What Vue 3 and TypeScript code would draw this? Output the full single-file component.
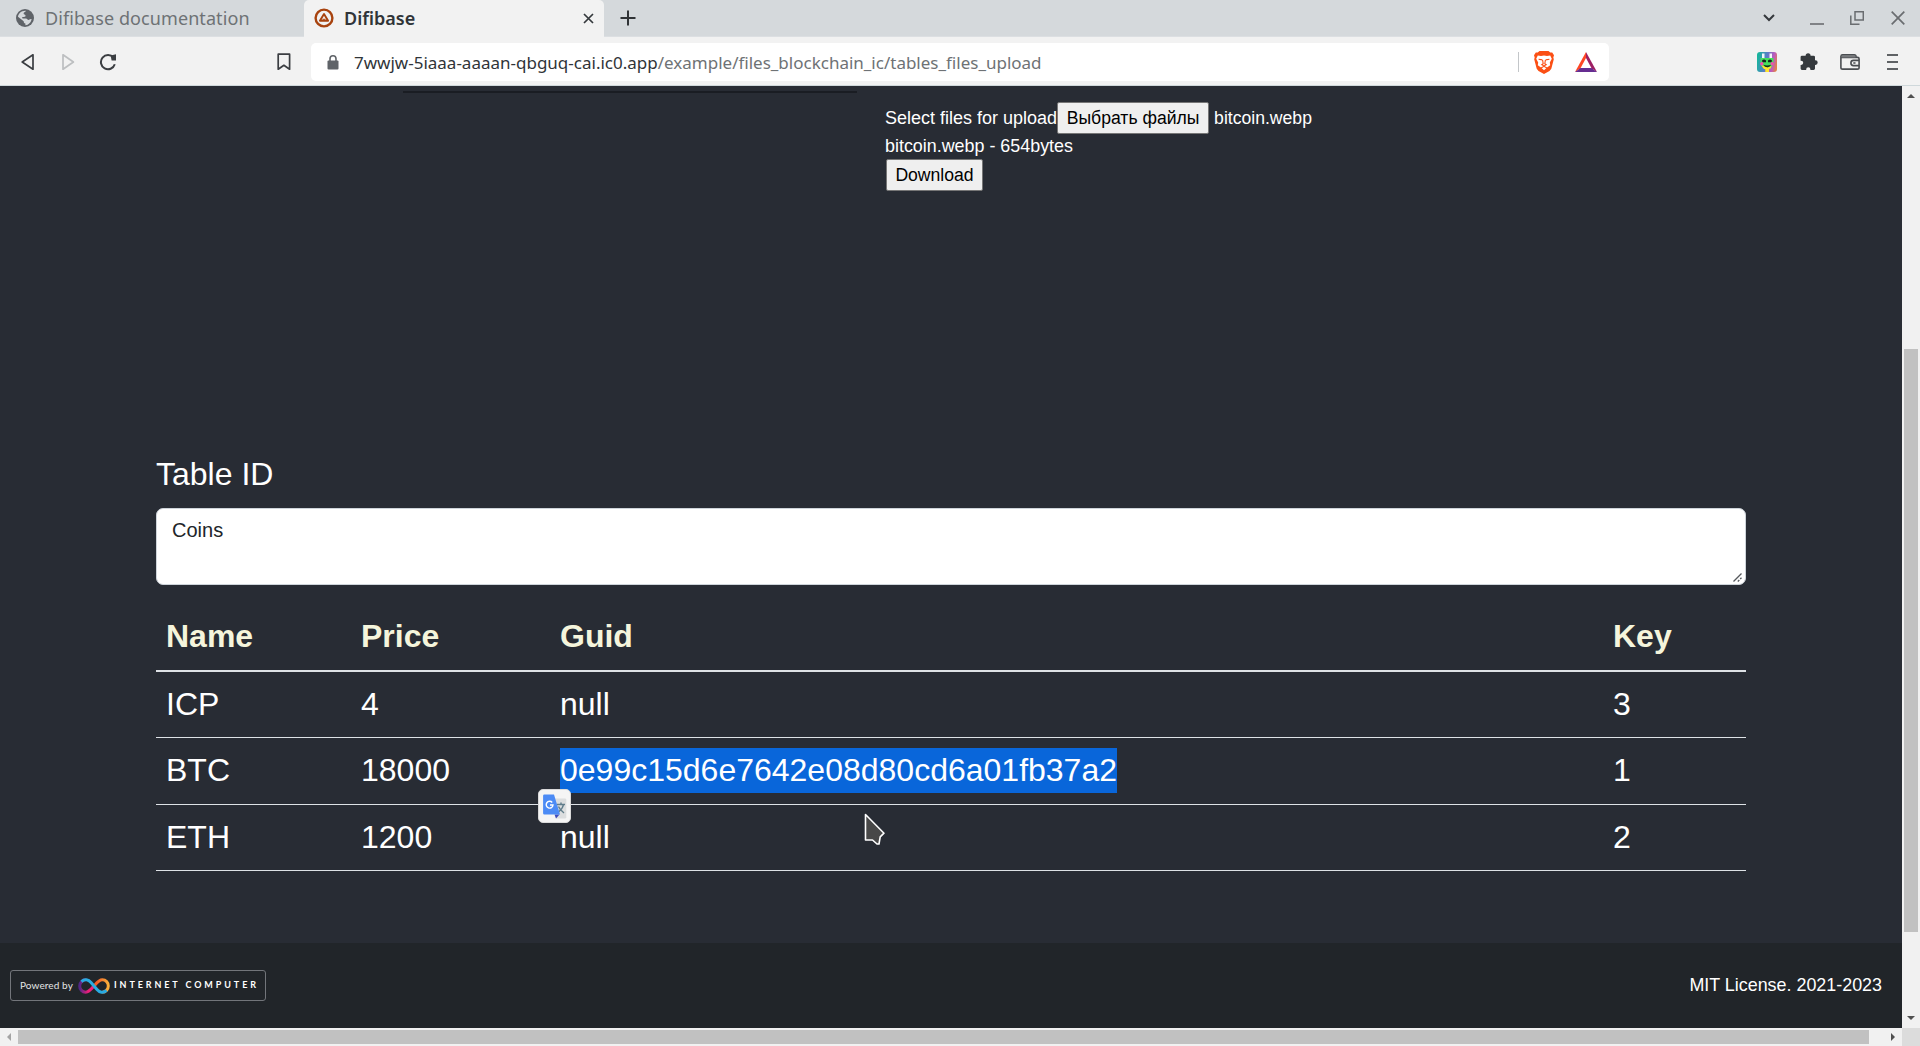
<script setup lang="ts">
interface Coin {
  name: string
  price: string
  guid: string
  key: string
  selected?: boolean
}

const coins: Coin[] = [
  { name: 'ICP', price: '4', guid: 'null', key: '3' },
  { name: 'BTC', price: '18000', guid: '0e99c15d6e7642e08d80cd6a01fb37a2', key: '1', selected: true },
  { name: 'ETH', price: '1200', guid: 'null', key: '2' },
]
</script>

<template>
  <div class="window">
    <div class="tabs">
      <div class="tab idle">
        <svg width="18" height="18" viewBox="0 0 18 18">
          <circle cx="9" cy="9" r="9" fill="#5f6368" />
          <path d="M10 1.900C9 3 7.600 2.900 7.600 4.600c0 1.300 2 .8 2 2.200 0 1.200-1.400 1.200-2.800 1.200-.9 0-1 1.400.2 1.400h2.800c1.600 0 1.600 1.500 2.600 1.500 1 0 1.200-.8 2.600-.8l.6-.2c-.6 3.400-3 6-6.200 6.300v-1.800c-1.400 0-1.700-1-1.700-2.200L2 7.800C2.400 4.500 5.600 1.500 10 1.900z" fill="#d5d9dc" />
        </svg>
        <span class="tab-title">Difibase documentation</span>
      </div>
      <div class="tab active">
        <svg width="20" height="20" viewBox="0 0 20 20" fill="none" stroke="#a8430f">
          <circle cx="10" cy="10" r="8.400" stroke-width="2.400" />
          <path d="M10 6 5.900 12.800h8.200z" stroke-width="1.900" stroke-linejoin="round" />
          <path d="M8.500 11.300h3" stroke-width="1" />
        </svg>
        <span class="tab-title">Difibase</span>
        <svg class="tab-close" width="11" height="11" viewBox="0 0 11 11" stroke="#35393d" stroke-width="1.700"><path d="M1 1l9 9M10 1l-9 9" /></svg>
      </div>
      <svg class="plus" width="16" height="16" viewBox="0 0 16 16" stroke="#303336" stroke-width="2"><path d="M8 .5v15M.5 8h15" /></svg>
      <div class="controls">
        <svg width="12" height="8" viewBox="0 0 12 8" fill="none" stroke="#35393d" stroke-width="2"><path d="M1 1l5 5 5-5" /></svg>
        <svg width="14" height="14" viewBox="0 0 14 14" stroke="#6a6d70" stroke-width="1.600"><path d="M0 13h14" /></svg>
        <svg width="14" height="14" viewBox="0 0 14 14" fill="none" stroke="#6a6d70" stroke-width="1.500"><path d="M5 .8h8.300v8.300H5zM.8 4.500v8.800H9.500" /></svg>
        <svg width="14" height="14" viewBox="0 0 14 14" stroke="#6a6d70" stroke-width="1.700"><path d="M.7.700l12.600 12.600M13.300.700.700 13.300" /></svg>
      </div>
    </div>

    <div class="toolbar">
      <div class="nav">
        <svg width="14" height="18" viewBox="0 0 14 18" fill="none" stroke="#3b3e42" stroke-width="1.700" stroke-linejoin="round"><path d="M12 1.800v14.400L1.200 9z" /></svg>
        <svg width="14" height="18" viewBox="0 0 14 18" fill="none" stroke="#bdbfc1" stroke-width="1.700" stroke-linejoin="round"><path d="M2 1.800v14.400L12.400 9z" /></svg>
        <svg class="reload" width="18" height="18" viewBox="0 0 18 18" fill="none" stroke="#3b3e42" stroke-width="2"><path d="M15.800 11.300A7.100 7.100 0 1 1 14.500 4.600" /><path d="M11.600 2.600 17 1.200v6.300h-4.400z" fill="#3b3e42" stroke="none" /></svg>
      </div>
      <svg class="bookmark" width="14" height="18" viewBox="0 0 14 18" fill="none" stroke="#3b3e42" stroke-width="1.700" stroke-linejoin="round"><path d="M1.200 1.200h11.400v15L6.900 12.300l-5.700 3.900z" /></svg>
      <div class="omnibox">
        <svg class="lock" width="12" height="15" viewBox="0 0 12 15"><rect x=".5" y="5.500" width="11" height="9" rx="1" fill="#5f6368" /><path d="M3 6V3.800a3 3 0 0 1 6 0V6" fill="none" stroke="#5f6368" stroke-width="1.600" /></svg>
        <span class="url"><b>7wwjw-5iaaa-aaaan-qbguq-cai.ic0.app</b>/example/files_blockchain_ic/tables_files_upload</span>
        <span class="separator"></span>
        <svg class="shield" width="20" height="23" viewBox="0 0 20 23">
          <path d="M5.500 0h9l1.800 1.600 1.900-.1L20 4.200l-.7 2.300.5 1.800-2.500 9.400-1.800 2.300L10 23l-5.500-3-1.800-2.300L.2 8.300l.5-1.800L0 4.200l1.800-2.700 1.900.1z" fill="#fb4f14" />
          <path d="M3.800 4.600 7 5l3-.5 3 .5 3.200-.4 1.600 3.200-2 3.600.4 2.800-3.200 2.400-3 2.600-3-2.600-3.200-2.400.4-2.800-2-3.600z" fill="#fff" />
          <path d="M4.600 8.300l3.800.6M15.400 8.300l-3.800.6M8.600 9l.6 3.800-1.400.9 2.200 1.200 2.200-1.200-1.400-.9.600-3.800M7 17l3-1.700 3 1.700" fill="none" stroke="#fb4f14" stroke-width="1.100" />
        </svg>
        <svg width="22" height="20" viewBox="0 0 22 20">
          <path d="M11 0v6L5.500 16.200 0 20z" fill="#ff4724" />
          <path d="M11 0v6l5.500 10.200L22 20z" fill="#9e1f63" />
          <path d="M0 20l5.500-4h11l5.500 4z" fill="#662d91" />
        </svg>
      </div>
      <div class="extensions">
        <svg width="20" height="20" viewBox="0 0 20 20">
          <defs>
            <linearGradient id="ext-bg" x1="0" x2="1" y1=".4" y2=".6"><stop offset="0" stop-color="#17b59c" /><stop offset=".45" stop-color="#5a7cc8" /><stop offset=".8" stop-color="#c05bbd" /><stop offset="1" stop-color="#e08248" /></linearGradient>
          </defs>
          <rect width="20" height="20" rx="3" fill="url(#ext-bg)" />
          <path d="M5 1.500h2.500V7H5zM12.500 1.500H15V7h-2.500z" fill="#f2f5fa" />
          <path d="M3.500 6h13v6l-3 4.500h-7l-3-4.500z" fill="#46e05c" />
          <path d="M4 13l3 4 3 .5 3.500-1 1-2.500-4 1.500z" fill="#ffe62b" />
          <path d="M5 8.500c1-1.500 3-1.500 4 0v1.700H5.500zM11 8.500c1-1.500 3-1.500 4 0l-.5 1.700H11z" fill="#16231c" />
          <circle cx="4.800" cy="11.800" r="1.700" fill="#f24fae" /><circle cx="15.200" cy="11.800" r="1.700" fill="#f24fae" />
          <path d="M6.500 12.800c2 .8 5 .8 7.500 0-.8 3-6 3.600-7.500 0z" fill="#14321a" />
          <path d="M8.300 16.200h3.700V20H8.300z" fill="#ffe62b" />
        </svg>
        <svg width="19" height="19" viewBox="0 0 19 19"><path d="M3 3.700h3.600a2.500 2.500 0 1 1 5 0h3a1.400 1.400 0 0 1 1.400 1.400v3.200h.4a2.300 2.300 0 0 1 0 4.600H16v3.600a1.400 1.400 0 0 1-1.400 1.400h-3.200v-.6a2.100 2.100 0 0 0-4.200 0v.6H3a1.400 1.400 0 0 1-1.400-1.400V13h.5a2.100 2.100 0 0 0 0-4.300h-.5V5.100A1.400 1.400 0 0 1 3 3.700z" fill="#35393d" /></svg>
        <svg width="20" height="16" viewBox="0 0 20 16" fill="none" stroke="#4a4d51" stroke-width="1.600"><path d="M.9 2.500A1.700 1.700 0 0 1 2.600.9h11.700a1.700 1.700 0 0 1 1.700 1.700v.8h1.500a1.600 1.600 0 0 1 1.600 1.600v8.400a1.700 1.700 0 0 1-1.700 1.700H2.600A1.700 1.700 0 0 1 .9 13.400zM1 3.400h15M19 6.400h-5.500a2.600 2.600 0 0 0 0 5.200H19M13.300 9H15.500" /><path d="M1.500 1.500h14v2h-14z" fill="#77797c" stroke="none" /></svg>
        <svg width="11" height="16" viewBox="0 0 11 16" stroke="#2f3337" stroke-width="1.700"><path d="M0 1h11M0 8h11M0 15h11" /></svg>
      </div>
    </div>

    <div class="viewport">
      <main class="page">
        <section class="upload">
          <div class="rule-column"><div class="rule"></div></div>
          <div class="upload-form">
            <div class="file-row"><span>Select files for upload</span><button class="choose">Выбрать файлы</button><span class="file-name">bitcoin.webp</span></div>
            <div class="file-info">bitcoin.webp - 654bytes</div>
            <button class="download">Download</button>
          </div>
        </section>

        <section class="table-section">
          <div class="label">Table ID</div>
          <div class="textarea">
            <span>Coins</span>
            <svg class="grip" width="9" height="9" viewBox="0 0 9 9" stroke="#55585c" stroke-width="1.300"><path d="M.5 8.500l8-8M4.800 8.500l1.500-1.500M7.200 6l1.300-1.300" /></svg>
          </div>
          <table>
            <thead>
              <tr><th class="c-name">Name</th><th class="c-price">Price</th><th class="c-guid">Guid</th><th class="c-key">Key</th></tr>
            </thead>
            <tbody>
              <tr v-for="coin in coins" :key="coin.name">
                <td>{{ coin.name }}</td>
                <td>{{ coin.price }}</td>
                <td><span :class="{ selected: coin.selected }">{{ coin.guid }}</span></td>
                <td>{{ coin.key }}</td>
              </tr>
            </tbody>
          </table>
        </section>

        <footer>
          <div class="badge">
            <span class="powered">Powered by</span>
            <svg width="32" height="16" viewBox="0 0 32 16" fill="none" stroke-width="3">
              <defs>
                <linearGradient id="ic-warm" x1="0" x2="1"><stop offset=".2" stop-color="#f15a24" /><stop offset="1" stop-color="#fbb03b" /></linearGradient>
                <linearGradient id="ic-pink" x1="0" x2="1"><stop offset="0" stop-color="#522785" /><stop offset=".6" stop-color="#ed1e79" /></linearGradient>
              </defs>
              <path d="M16 8c3-3.500 5-6.200 8.300-6.200A6 6 0 0 1 30.300 8c0 3.500-2.800 6.200-6 6.200" stroke="url(#ic-warm)" />
              <path d="M16 8c-3 3.500-5 6.200-8.300 6.200A6 6 0 0 1 1.700 8c0-3.500 2.800-6.200 6-6.200" stroke="url(#ic-pink)" />
              <path d="M3.500 3.600c3.200-3 7-2 9.500.9l6 7c2.500 3 6.300 3.900 9.500.9" stroke="#29abe2" />
            </svg>
            <span class="brand">INTERNET COMPUTER</span>
          </div>
          <span class="license">MIT License. 2021-2023</span>
        </footer>

        <div class="translate">
          <svg width="24" height="26" viewBox="0 0 24 26">
            <path d="M9 4.500h13a1.300 1.300 0 0 1 1.300 1.300v17.400a1.300 1.300 0 0 1-1.300 1.300h-9z" fill="#dcdedf" />
            <path d="M14 10.500h8M18 8.500v2M20.500 10.500c-.5 3-2.500 5.500-5 7.500M15.500 12.500c1 2.500 3 4.500 5.500 6.500" fill="none" stroke="#607d8b" stroke-width="1.400" />
            <path d="M11.500 20.500h5L13 24.500z" fill="#3c4cc0" />
            <path d="M1.300.5H11l6 20H1.300A1.200 1.200 0 0 1 .1 19.300V1.700A1.200 1.200 0 0 1 1.300.5z" fill="#4c8bf5" />
            <path d="M9.200 8.500A3.400 3.400 0 1 0 10 11H7" fill="none" stroke="#fff" stroke-width="1.400" />
          </svg>
        </div>
        <svg class="pointer" width="22" height="34" viewBox="0 0 22 34"><path d="M1.500 1.500v25.500h7l4.500 4h2l1.200-7.200 3.800-3.600z" fill="#484848" stroke="#fff" stroke-width="1.600" stroke-linejoin="round" /></svg>
      </main>

      <div class="scroll-y">
        <svg width="8" height="4" viewBox="0 0 8 4"><path d="M0 4l4-4 4 4z" fill="#505050" /></svg>
        <div class="thumb-y"></div>
        <svg width="8" height="4" viewBox="0 0 8 4"><path d="M0 0h8L4 4z" fill="#505050" /></svg>
      </div>
    </div>
    <div class="scroll-x">
      <svg width="4" height="8" viewBox="0 0 4 8"><path d="M4 0v8L0 4z" fill="#a3a3a3" /></svg>
      <div class="thumb-x"></div>
      <svg width="4" height="8" viewBox="0 0 4 8"><path d="M0 0v8l4-4z" fill="#505050" /></svg>
      <div class="corner"></div>
    </div>
  </div>
</template>

<style>
body {
  margin: 0;
  overflow: hidden;
}
</style>

<style scoped>
.window {
  width: 1920px;
  height: 1046px;
  display: flex;
  flex-direction: column;
  overflow: hidden;
  font-family: "Liberation Sans", Arial, sans-serif;
  box-sizing: border-box;
}
.window *,
.window *::before {
  box-sizing: border-box;
}
svg {
  display: block;
  flex: none;
}

/* Browser chrome */
.tabs {
  flex: none;
  height: 37px;
  display: flex;
  align-items: center;
  background: #d5d9dc;
  border-bottom: 1px solid #dcdfe2;
  font-family: "Noto Sans", "Open Sans", sans-serif;
  font-size: 18px;
}
.tab {
  display: flex;
  align-items: center;
  height: 37px;
  white-space: nowrap;
}
.idle {
  width: 304px;
  padding-left: 16px;
  gap: 11px;
  color: #6e7275;
}
.idle .tab-title {
  letter-spacing: 0.08px;
}
.active {
  width: 300px;
  padding-left: 10px;
  gap: 10px;
  background: #f2f2f2;
  border-radius: 5px 5px 0 0;
  color: #303438;
}
.active .tab-title {
  font-weight: 600;
}
.tab-close {
  margin-left: auto;
  margin-right: 10px;
}
.plus {
  margin-left: 16px;
}
.controls {
  margin-left: auto;
  margin-right: 15px;
  display: flex;
  align-items: center;
}
.controls svg + svg {
  margin-left: 27px;
}
.controls svg:nth-child(2) {
  margin-left: 35px;
}
.controls svg:nth-child(3) {
  margin-left: 26px;
}
.toolbar {
  flex: none;
  height: 49px;
  display: flex;
  align-items: center;
  padding-top: 2px;
  background: #f2f2f2;
  border-bottom: 1px solid #cfd8db;
}
.nav {
  width: 277px;
  padding: 0 0 1px 21px;
  display: flex;
  align-items: center;
  gap: 26px;
}
.reload {
  margin-left: -2px;
}
.bookmark {
  margin-right: 20px;
}
.omnibox {
  width: 1298px;
  height: 38px;
  display: flex;
  align-items: center;
  background: #fff;
  border-radius: 5px;
  padding: 0 12px 0 16px;
}
.url {
  margin-left: 15px;
  font-family: "Noto Sans", "Open Sans", sans-serif;
  font-size: 17px;
  color: #6e7275;
  white-space: nowrap;
}
.url b {
  font-weight: 400;
  color: #303438;
}
.separator {
  width: 1px;
  height: 20px;
  margin-left: auto;
  background: #c3c6c9;
}
.shield {
  margin: 0 21px 0 15px;
}
.extensions {
  flex: 1;
  display: flex;
  align-items: center;
  justify-content: flex-end;
  gap: 22px;
  padding: 0 22px 1px 0;
}
.extensions svg:last-child {
  margin-left: 5px;
}

/* Page */
.viewport {
  flex: none;
  height: 942px;
  display: flex;
}
.page {
  position: relative;
  width: 1902px;
  display: flex;
  flex-direction: column;
  background: #282c34;
  color: #fff;
  font-size: 18px;
}
.upload {
  height: 366px;
  display: flex;
  padding-left: 403px;
}
.rule-column {
  width: 482px;
  padding-top: 5px;
}
.rule {
  width: 454px;
  height: 2px;
  background: #1a1d23;
}
.upload-form {
  padding-top: 16px;
}
.file-row {
  display: flex;
  align-items: center;
  height: 32px;
}
.choose,
.download {
  height: 32px;
  padding: 0;
  border: 1px solid #767676;
  border-radius: 2px;
  background: #efefef;
  color: #000;
  font: 17.6px "Liberation Sans", Arial, sans-serif;
}
.choose {
  width: 152px;
}
.file-name {
  margin-left: 5px;
  font-size: 17.6px;
}
.file-info {
  height: 25px;
  line-height: 25px;
  font-size: 17.9px;
}
.download {
  display: block;
  width: 97px;
  margin-left: 1px;
}
.table-section {
  height: 491px;
  width: 1590px;
  margin-left: 156px;
}
.label {
  height: 56px;
  line-height: 44px;
  font-size: 32px;
}
.textarea {
  position: relative;
  height: 77px;
  padding: 7px 15px;
  background: #fff;
  border: 1px solid #ced4da;
  border-radius: 7px;
  color: #212529;
  font-size: 20px;
  line-height: 28px;
}
.grip {
  position: absolute;
  right: 3px;
  bottom: 2px;
}
table {
  width: 1590px;
  margin-top: 19px;
  table-layout: fixed;
  border-collapse: separate;
  border-spacing: 0;
  font-size: 32px;
  line-height: 45px;
}
th,
td {
  height: 66px;
  padding: 10px 10px 0;
  text-align: left;
  vertical-align: top;
  border-bottom: 1px solid #dee2e6;
}
tbody tr:nth-child(2) td {
  height: 67px;
}
th {
  height: 68px;
  color: #f5f5dc;
  border-bottom-width: 2px;
}
.c-name {
  width: 195px;
}
.c-price {
  width: 199px;
}
.c-guid {
  width: 1053px;
}
.selected {
  display: inline-block;
  height: 45px;
  vertical-align: top;
  background: #0966da;
}
footer {
  height: 85px;
  display: flex;
  align-items: center;
  justify-content: space-between;
  padding: 0 20px 0 10px;
  background: #212529;
}
.badge {
  width: 256px;
  height: 31px;
  display: flex;
  align-items: center;
  padding-left: 9px;
  border: 1px solid #72757a;
  border-radius: 3px;
  font-family: Lato, sans-serif;
  white-space: nowrap;
}
.powered {
  width: 58px;
  font-size: 10px;
  letter-spacing: 0.1px;
  color: #e4e5e6;
}
.brand {
  margin-left: 4px;
  font-size: 9px;
  font-weight: 700;
  letter-spacing: 2.9px;
}
.powered,
.brand {
  padding-bottom: 2px;
}
.license {
  font-size: 17.9px;
}
.translate {
  position: absolute;
  left: 538px;
  top: 703px;
  width: 33px;
  height: 34px;
  padding: 4px;
  background: #f5f5f5;
  border: 1px solid #dadada;
  border-radius: 5px;
}
.pointer {
  position: absolute;
  left: 864px;
  top: 727px;
}

/* Scroll bars */
.scroll-y {
  width: 18px;
  display: flex;
  flex-direction: column;
  align-items: center;
  background: #f1f1f1;
  padding: 8px 0;
}
.thumb-y {
  width: 14px;
  height: 583px;
  margin: 251px 0 auto;
  background: #c1c1c1;
}
.scroll-x {
  flex: none;
  height: 18px;
  display: flex;
  align-items: center;
  background: #f1f1f1;
  padding-left: 7px;
}
.thumb-x {
  width: 1851px;
  height: 14px;
  margin-left: 7px;
  margin-right: 22px;
  background: #c1c1c1;
}
.corner {
  width: 18px;
  height: 18px;
  margin-left: auto;
  background: #dcdcdc;
}
</style>
